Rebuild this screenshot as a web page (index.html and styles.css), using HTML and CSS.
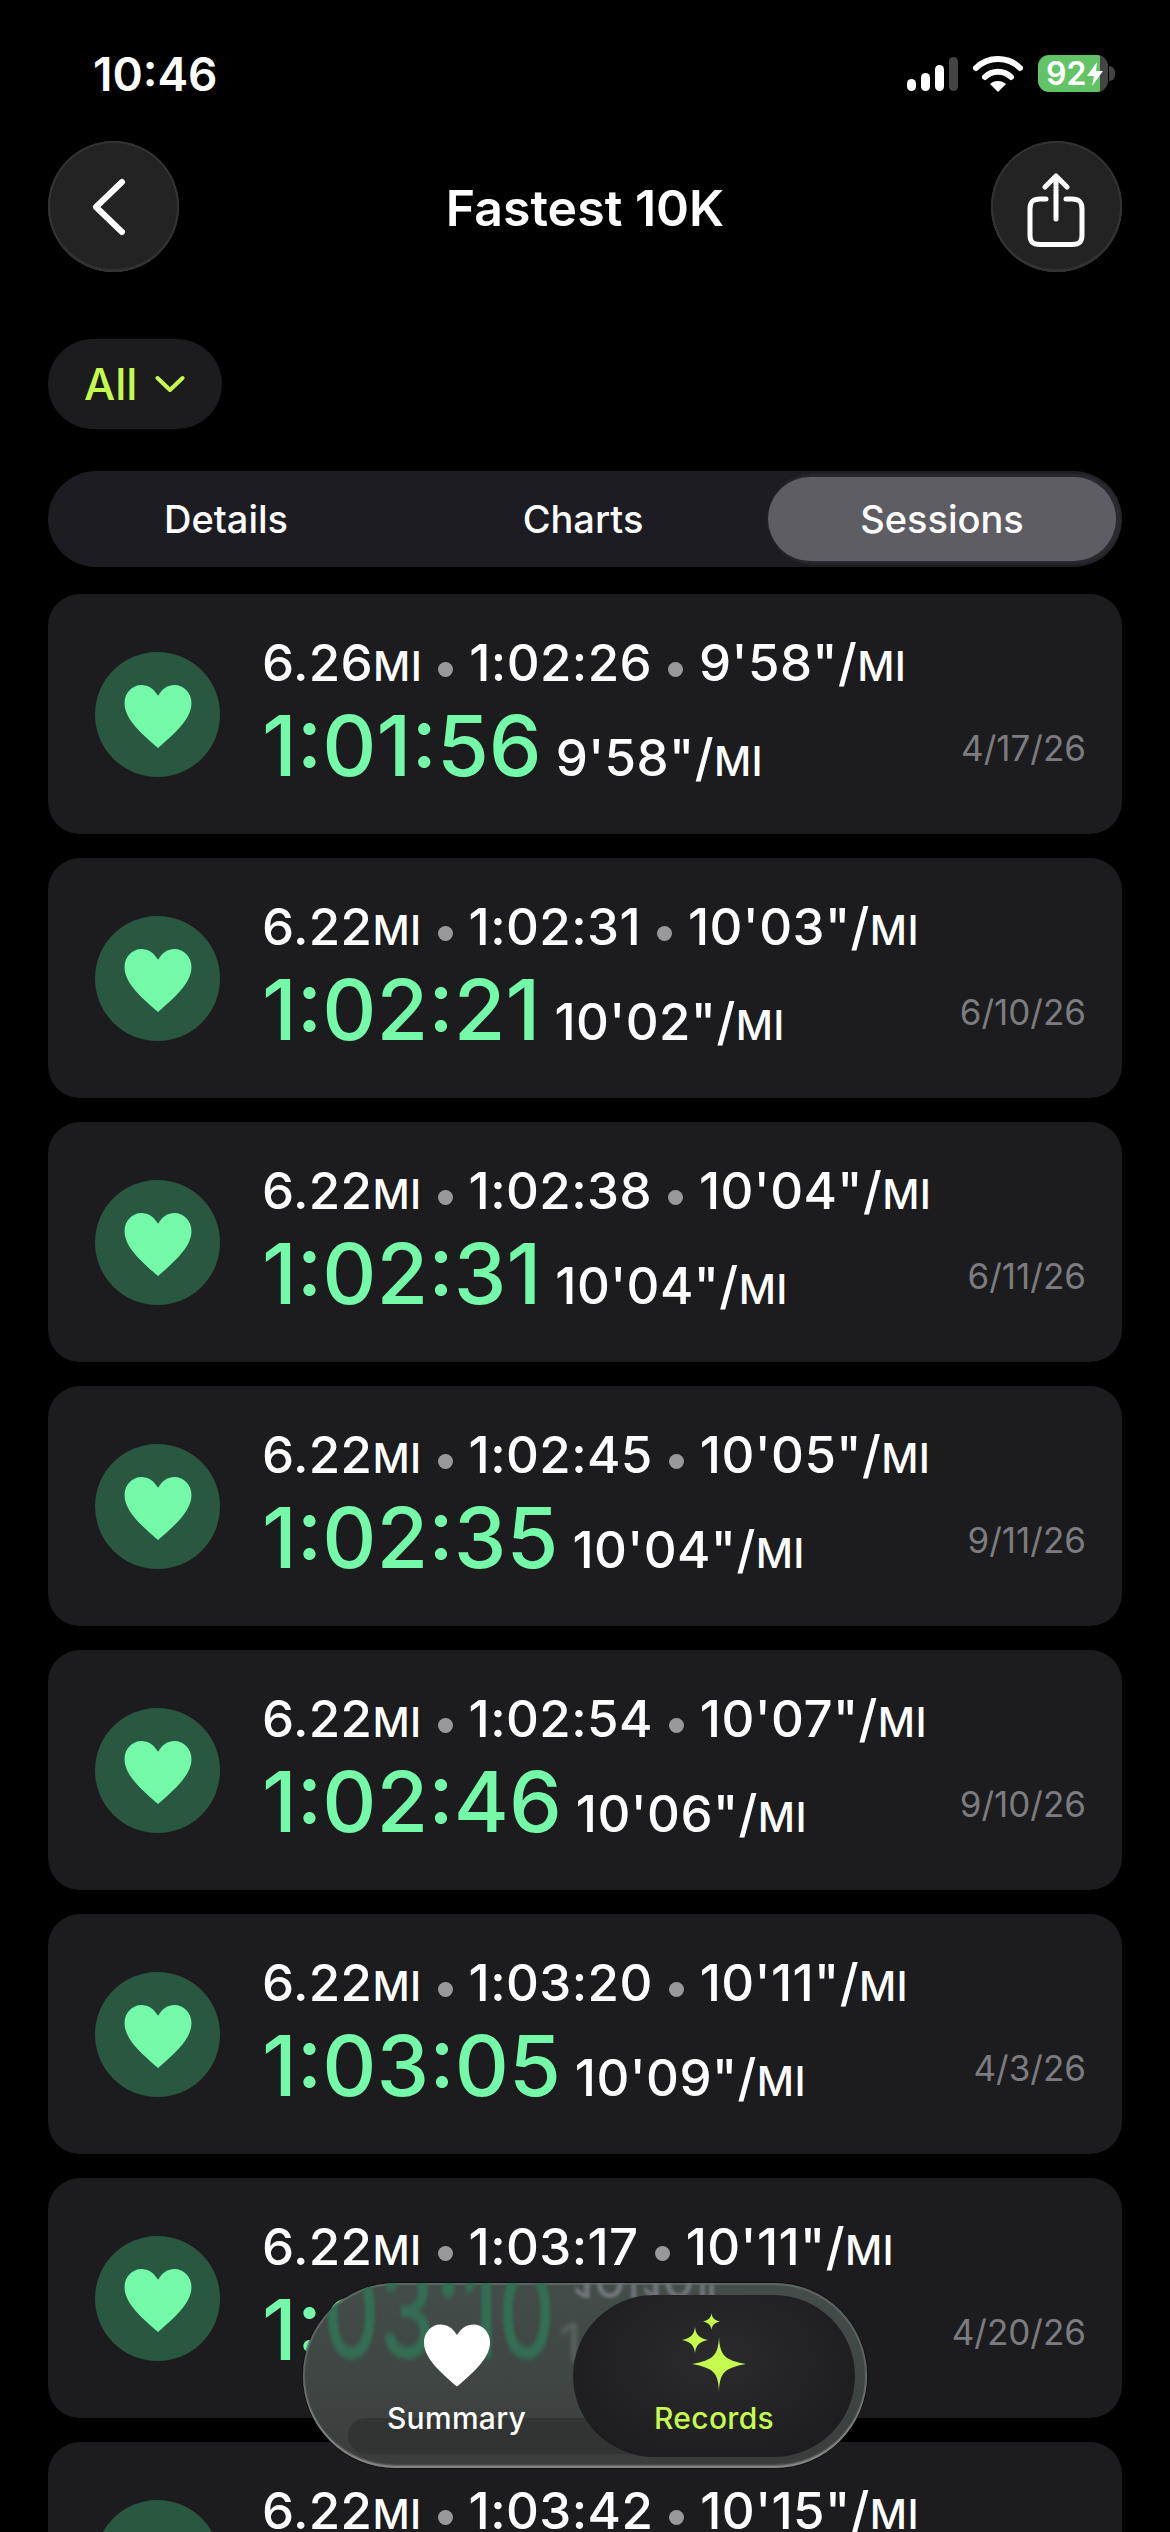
FILE: index.html
```html
<!DOCTYPE html>
<html lang="en">
<head>
    <meta charset="UTF-8">
    <meta name="viewport" content="width=device-width, initial-scale=1.0">
    <title>Fastest 10K</title>
    <link rel="stylesheet" href="styles.css">
</head>
<body>
    <div class="status-bar">
        <span class="time">10:46</span>
        <div class="status-icons">
            <svg width="51" height="34" viewBox="0 0 51 34"><rect x="0" y="22" width="9" height="12" rx="4.5" fill="#fff"/><rect x="14" y="16" width="9" height="18" rx="4.5" fill="#fff"/><rect x="28" y="8" width="9" height="26" rx="4.5" fill="#fff"/><rect x="42" y="0" width="9" height="34" rx="4.5" fill="#444"/></svg>
            <svg width="50" height="37" viewBox="0 0 50 37"><path d="M3 13C15 1 35 1 47 13" fill="none" stroke="#fff" stroke-width="6" stroke-linecap="round"/><path d="M12 22C19 15 31 15 38 22" fill="none" stroke="#fff" stroke-width="6" stroke-linecap="round"/><path d="M25 37L17 29C21 25 29 25 33 29Z" fill="#fff"/></svg>
            <div class="battery">
                <div class="battery-body">92<svg width="16" height="24" viewBox="0 0 16 24"><path d="M10 0L0 14H7L5 24L16 9H9Z" fill="#fff"/></svg></div>
                <div class="battery-cap"></div>
            </div>
        </div>
    </div>

    <div class="nav-bar">
        <button class="round-btn back-btn">
            <svg width="40" height="60" viewBox="0 0 40 60"><path d="M33 5L7 30L33 55" fill="none" stroke="#fff" stroke-width="6" stroke-linecap="round" stroke-linejoin="round"/></svg>
        </button>
        <h1 class="title">Fastest 10K</h1>
        <button class="round-btn share-btn">
            <svg width="60" height="74" viewBox="0 0 60 74"><path d="M20 26H14C6.500 26 4 29 4 36V61.500C4 69 6.500 71.500 14 71.500H46C53.500 71.500 56 69 56 61.500V36C56 29 53.500 26 46 26H40" fill="none" stroke="#fff" stroke-width="5" stroke-linecap="round"/><path d="M30 46V4M19 14L30 3L41 14" fill="none" stroke="#fff" stroke-width="5" stroke-linecap="round" stroke-linejoin="round"/></svg>
        </button>
    </div>

    <div class="filter-row">
        <div class="filter">All
            <svg width="30" height="18" viewBox="0 0 30 18"><path d="M2.500 3L15 15L27.500 3" fill="none" stroke="#c4fb4e" stroke-width="4" stroke-linecap="round" stroke-linejoin="round"/></svg>
        </div>
    </div>

    <div class="tabs">
        <div class="tab">Details</div>
        <div class="tab">Charts</div>
        <div class="tab active">Sessions</div>
    </div>

    <div class="list" id="list"></div>

    <div class="dock">
        <div class="dock-band"></div>
        <div class="ghost ghost-time"></div>
        <div class="ghost ghost-pace"></div>
        <div class="ghost ghost-one"></div>
        <div class="dock-item">
            <svg class="dock-heart" width="68" height="63" viewBox="0 0 70 64"><path d="M35 64C14 46 1 33 1 18C1 8 9 0 18 0C25 0 31 4 35 11C39 4 45 0 52 0C61 0 69 8 69 18C69 33 56 46 35 64Z" fill="#fff"/></svg>
            <span>Summary</span>
        </div>
        <div class="dock-item selected">
            <svg width="64" height="78" viewBox="0 0 64 78"><path d="M37 24C38 42 42 47 64 51C42 55 38 60 37 78C36 60 32 55 10 51C32 47 36 42 37 24Z" fill="#c4fb4e"/><path d="M13 14C14 22 17 25 26 27C17 29 14 32 13 40C12 32 9 29 0 27C9 25 12 22 13 14Z" fill="#c4fb4e"/><path d="M29.500 0C30 5 32.500 7 38 8.500C32.500 10 30 12 29.500 17C29 12 26.500 10 21 8.500C26.500 7 29 5 29.500 0Z" fill="#c4fb4e"/></svg>
            <span>Records</span>
        </div>
    </div>

    <script>
        const sessions = [
            ['6.26', '1:02:26', `9'58"`, '1:01:56', `9'58"`, '4/17/26'],
            ['6.22', '1:02:31', `10'03"`, '1:02:21', `10'02"`, '6/10/26'],
            ['6.22', '1:02:38', `10'04"`, '1:02:31', `10'04"`, '6/11/26'],
            ['6.22', '1:02:45', `10'05"`, '1:02:35', `10'04"`, '9/11/26'],
            ['6.22', '1:02:54', `10'07"`, '1:02:46', `10'06"`, '9/10/26'],
            ['6.22', '1:03:20', `10'11"`, '1:03:05', `10'09"`, '4/3/26'],
            ['6.22', '1:03:17', `10'11"`, '1:03:10', `10'10"`, '4/20/26'],
            ['6.22', '1:03:42', `10'15"`]
        ];
        const heart = '<svg width="70" height="63" viewBox="0 0 70 64"><path d="M35 64C14 46 1 33 1 18C1 8 9 0 18 0C25 0 31 4 35 11C39 4 45 0 52 0C61 0 69 8 69 18C69 33 56 46 35 64Z" fill="#74f9a8"/></svg>';
        // the last row runs off the bottom of the screen, only its first line shows
        document.getElementById('list').innerHTML = sessions.map(s => `
            <div class="card">
                <div class="card-icon">${heart}</div>
                <div class="card-text">
                    <div class="line-top">${s[0]}<small>MI</small><i class="dot"></i>${s[1]}<i class="dot"></i>${s[2]}/<small>MI</small></div>
                    ${s[3] ? `<div class="line-main"><b>${s[3]}</b><span>${s[4]}/<small>MI</small></span></div>` : '<div class="line-main"></div>'}
                </div>
                ${s[5] ? `<div class="card-date">${s[5]}</div>` : ''}
            </div>`).join('');
    </script>
</body>
</html>
```

FILE: styles.css
```css
* {
    box-sizing: border-box;
}
html, body {
    margin: 0;
    height: 2532px;
    overflow: hidden;
    background: #000;
}
body {
    position: relative;
    font-family: Inter, "Noto Sans", sans-serif;
    color: #fff;
}
.status-bar {
    height: 141px;
    padding: 52px 55px 0 93px;
    display: flex;
    justify-content: space-between;
    align-items: flex-start;
}
.time {
    font-size: 46px;
    font-weight: 600;
    line-height: 44px;
}
.status-icons {
    margin-top: 3px;
    display: flex;
    align-items: center;
    gap: 15px;
}
.battery {
    display: flex;
    align-items: center;
    gap: 1px;
}
.battery-body {
    width: 70px;
    height: 37px;
    padding-left: 8px;
    border-radius: 11px;
    background: linear-gradient(90deg, #62c466 89%, #444 89%);
    font-size: 32px;
    font-weight: 600;
    line-height: 37px;
    display: flex;
    align-items: center;
    gap: 1px;
}
.battery-cap {
    width: 6px;
    height: 15px;
    border-radius: 0 8px 8px 0;
    background: #444;
}
.nav-bar {
    padding: 0 48px;
    display: flex;
    justify-content: space-between;
    align-items: center;
}
.round-btn {
    width: 131px;
    height: 131px;
    border-radius: 50%;
    border: 0;
    padding: 0;
    background: #232323;
    box-shadow: inset 0 0 0 2px #333, inset 0 -2px 2px #444;
    display: flex;
    justify-content: center;
    align-items: center;
}
.back-btn svg {
    margin-right: 9px;
}
.share-btn svg {
    margin-top: 6px;
}
.title {
    margin: 0;
    padding-top: 2px;
    font-size: 50px;
    font-weight: 600;
}
.filter-row {
    padding: 67px 48px 0;
    display: flex;
}
.filter {
    height: 90px;
    padding: 0 37px 0 36px;
    border-radius: 45px;
    background: #1c1c1e;
    color: #c4fb4e;
    font-size: 44px;
    font-weight: 500;
    display: flex;
    align-items: center;
    gap: 18px;
}
.tabs {
    margin: 42px 48px 0;
    height: 96px;
    padding: 6px;
    border-radius: 48px;
    background: #1c1c22;
    overflow: hidden;
    display: grid;
    grid-template-columns: 344px 370px 348px;
}
.tab {
    border-radius: 42px;
    font-size: 38px;
    font-weight: 500;
    color: #fff;
    display: flex;
    justify-content: center;
    align-items: center;
}
.tab.active {
    background: #5e5d63;
    box-shadow: 3px 0 3px 3px #2a2a30;
}
.list {
    margin-top: 27px;
    padding: 0 48px;
    display: flex;
    flex-direction: column;
    gap: 24px;
}
.card {
    flex: none;
    height: 240px;
    padding: 0 36px 0 47px;
    border-radius: 32px;
    background: #1c1c1e;
    display: flex;
    align-items: center;
}
.card-icon {
    flex: none;
    width: 125px;
    height: 125px;
    padding-top: 4px;
    border-radius: 50%;
    background: #2a5740;
    display: flex;
    justify-content: center;
    align-items: center;
}
.card-text {
    margin-left: 42px;
    padding-bottom: 4px;
    flex: 1;
}
.line-top {
    font-size: 51px;
    font-weight: 500;
    letter-spacing: 0.4px;
    line-height: 60px;
    white-space: nowrap;
}
.line-top small, .line-main small {
    font-size: 0.8em;
}
.dot {
    display: inline-block;
    width: 15px;
    height: 15px;
    margin: 0 16px;
    border-radius: 50%;
    background: #98989d;
    vertical-align: 4px;
}
.line-main {
    margin-top: 4px;
    min-height: 92px;
    display: flex;
    align-items: baseline;
    gap: 14px;
    white-space: nowrap;
}
.line-main b {
    font-size: 84px;
    font-weight: 500;
    line-height: 92px;
    color: #74f9a8;
}
.line-main span {
    font-size: 51px;
    font-weight: 500;
    letter-spacing: 0.4px;
}
.card-date {
    flex: none;
    margin-top: 68px;
    font-size: 35px;
    color: #7c7c80;
}
.dock {
    position: absolute;
    left: 303px;
    top: 2283px;
    width: 564px;
    height: 185px;
    border-radius: 93px;
    overflow: hidden;
    background: linear-gradient(180deg, #434d49 0%, #3f4643 50%, #3a3c3b 100%);
    box-shadow: inset 0 0 0 2px rgba(255, 255, 255, 0.14), inset 0 -3px 2px rgba(255, 255, 255, 0.28), 0 0 0 1px rgba(0, 0, 0, 0.4);
    padding: 12px 12px 11px 37px;
    display: flex;
}
.dock-band {
    position: absolute;
    left: 45px;
    right: 60px;
    top: 135px;
    height: 36px;
    border-radius: 18px;
    background: #323433;
}
/* the row under the glass shows through bent, so these are drawn from css only */
.ghost {
    position: absolute;
    white-space: nowrap;
    font-weight: 500;
}
.ghost-time {
    left: 20px;
    top: -30px;
    font-size: 100px;
    line-height: 120px;
    color: #336e55;
    transform: scale(0.88, 1.25);
    transform-origin: left center;
    filter: blur(2px);
}
.ghost-time::before {
    content: "03:10";
}
.ghost-pace {
    left: 270px;
    top: -33px;
    font-size: 50px;
    line-height: 60px;
    color: #70757a;
    transform: scaleY(-1);
    filter: blur(1.5px);
}
.ghost-pace::before {
    content: "10'10\"";
}
.ghost-one {
    left: 256px;
    top: 30px;
    font-size: 54px;
    line-height: 60px;
    color: #5a625e;
    filter: blur(2px);
}
.ghost-one::before {
    content: "1";
}
.dock-item {
    position: relative;
    flex: 1;
    display: flex;
    flex-direction: column;
    align-items: center;
    justify-content: flex-end;
    padding-bottom: 21px;
    gap: 9px;
    font-size: 30px;
    font-weight: 500;
    letter-spacing: 0.3px;
    line-height: 36px;
}
.dock-heart {
    margin-bottom: 4px;
}
.dock-item.selected {
    flex: none;
    width: 282px;
    border-radius: 81px;
    background: radial-gradient(ellipse at 50% 40%, #2b2b2d 0%, #1f1f22 70%, #1a1a1c 100%);
    color: #c4fb4e;
}
```
